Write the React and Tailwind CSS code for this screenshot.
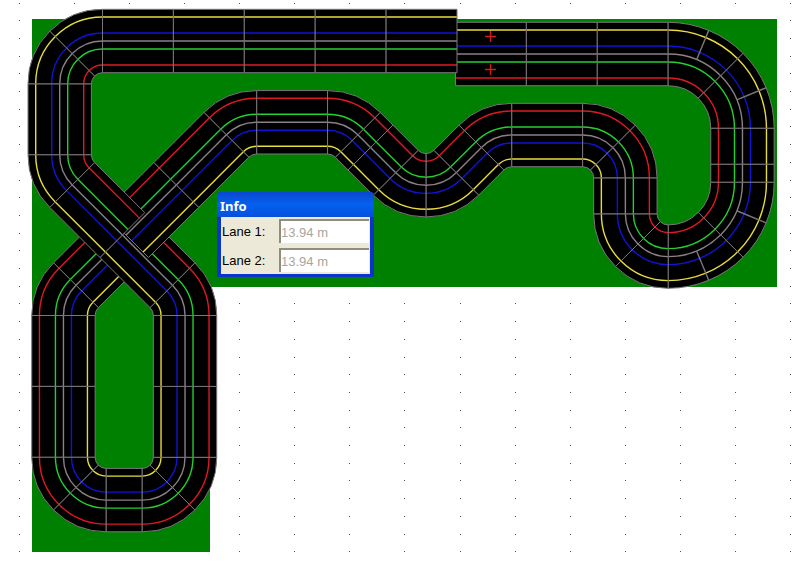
import React from "react";

const HALF_WIDTH = 31.7;
const R1 = 42.8;
const R2 = 74.3;
const FULL = 70.9;
const HALF = 35.6;

// Lane offsets are measured to the right of the driving direction.
const LANES = [
  { offset: 24, color: "#e8dc3c" },
  { offset: 8, color: "#1212d8" },
  { offset: 0, color: "#8a8086" },
  { offset: -8, color: "#22d030" },
  { offset: -24, color: "#e01822" },
];

const line = (length, layer = 1) => ({ length, layer });
const left = (angle, radius = R1, rib = false) => ({ angle: -angle, radius, rib, layer: 1 });
const right = (angle, radius = R1, rib = false) => ({ angle, radius, rib, layer: 1 });

// Every section in driving order; the layers make the crossing.
const SECTIONS = [
  line(FULL), line(FULL), line(FULL), line(FULL), line(FULL),
  left(45), left(45),
  line(FULL),
  left(45),
  line(FULL, 4), line(FULL, 2),
  right(45),
  line(FULL), line(FULL),
  right(45), right(45),
  line(36),
  right(45), right(45),
  line(FULL), line(FULL),
  right(45),
  line(FULL, 0), line(FULL, 3),
  line(FULL),
  right(45),
  line(FULL),
  right(45),
  line(18), line(HALF),
  left(45), left(45),
  line(HALF),
  right(45),
  line(FULL),
  right(45), right(45),
  line(36),
  left(45), left(45),
  left(45, R2, true), left(45, R2, true),
  line(18), line(36),
  left(45, R2, true), left(45, R2, true),
  line(FULL), line(FULL), line(FULL),
];

const rad = (deg) => (deg * Math.PI) / 180;

const side = (pose, offset) => [
  pose.x - Math.sin(rad(pose.h)) * offset,
  pose.y + Math.cos(rad(pose.h)) * offset,
];

function advance(pose, section, part = 1) {
  if (section.length) {
    return {
      x: pose.x + Math.cos(rad(pose.h)) * section.length * part,
      y: pose.y + Math.sin(rad(pose.h)) * section.length * part,
      h: pose.h,
    };
  }
  const turn = Math.sign(section.angle) * section.radius;
  const [cx, cy] = side(pose, turn);
  const h = pose.h + section.angle * part;
  const [x, y] = side({ x: cx, y: cy, h }, -turn);
  return { x, y, h };
}

const at = ([x, y]) => `${x.toFixed(2)} ${y.toFixed(2)}`;

function run(section, from, to, offset, backwards = false) {
  const target = at(side(backwards ? from : to, offset));
  if (section.length) return `L${target}`;
  const sign = Math.sign(section.angle);
  const r = section.radius - sign * offset;
  const sweep = sign > 0 !== backwards ? 1 : 0;
  return `A${r} ${r} 0 0 ${sweep} ${target}`;
}

function buildTrack() {
  let pose = { x: 457, y: 41, h: 180 };
  const pieces = SECTIONS.map((section, id) => {
    const from = pose;
    const to = advance(pose, section);
    pose = to;
    const outline =
      `M${at(side(from, HALF_WIDTH))}` +
      run(section, from, to, HALF_WIDTH) +
      `L${at(side(to, -HALF_WIDTH))}` +
      run(section, from, to, -HALF_WIDTH, true) +
      "Z";
    const lanes = LANES.map(({ offset, color }) => ({
      color,
      d: `M${at(side(from, offset))}${run(section, from, to, offset)}`,
    }));
    let rib = null;
    if (section.rib) {
      const mid = advance(from, section, 0.5);
      rib = `M${at(side(mid, 0))}L${at(side(mid, HALF_WIDTH))}`;
    }
    return { id, layer: section.layer, outline, lanes, rib };
  });
  return pieces.sort((a, b) => a.layer - b.layer || b.id - a.id);
}

const TRACK = buildTrack();

const DOTS = [];
for (let col = 0; col < 40; col++) {
  for (let row = 0; row < 70; row++) {
    DOTS.push([Math.round(19.2 + col * 55.04), Math.round(2.5 + row * 17.7)]);
  }
}

function Piece({ piece }) {
  return (
    <g fill="none" strokeWidth="1.4">
      <path d={piece.outline} fill="#000" />
      {piece.lanes.map((lane) => (
        <path key={lane.color} d={lane.d} stroke={lane.color} />
      ))}
      <path d={piece.outline} stroke="#7c767a" strokeWidth="1" />
      {piece.rib && <path d={piece.rib} stroke="#7c767a" />}
    </g>
  );
}

function TrackPlan() {
  return (
    <svg className="block h-screen w-full" role="img" aria-label="Track plan">
      {DOTS.map(([x, y]) => (
        <rect key={`${x}-${y}`} x={x} y={y} width="1" height="1" fill="#505050" />
      ))}
      <path d="M32 19H777V287H210V552H32Z" fill="#008000" />
      {TRACK.map((piece) => (
        <Piece key={piece.id} piece={piece} />
      ))}
      <path
        d="M485 36.5H496M490.5 31V42M485 69.5H496M490.5 64V75"
        stroke="#d01c1c"
        strokeWidth="1.3"
      />
    </svg>
  );
}

function LaneField({ id, label, value }) {
  return (
    <div className="flex items-center">
      <label htmlFor={id} className="w-[57px] pt-0.5 text-black">
        {label}
      </label>
      <input
        id={id}
        disabled
        defaultValue={value}
        className="h-6 min-w-0 flex-1 border-t-2 border-l-2 border-[#8f8c7e] bg-white text-[#a8a69c]"
      />
    </div>
  );
}

function InfoWindow() {
  return (
    <section
      aria-labelledby="info-title"
      className="absolute top-48 left-[217px] w-[157px] rounded-t-sm border-x-4 border-b-3 border-[#0a35cc] bg-[#0a35cc] font-['Liberation_Sans',Arial,sans-serif] text-[13px] leading-4"
    >
      <h2
        id="info-title"
        className="-mx-1 h-[25px] rounded-t-sm bg-linear-to-b from-[#0a48d0] via-[#0560f0] to-[#0450dc] px-[3px] pt-1 font-['Noto_Sans','Open_Sans',sans-serif] text-[13px] leading-5 font-bold text-white"
      >
        Info
      </h2>
      <div className="flex flex-col gap-[5px] bg-[#ece9d8] px-px pt-0.5 pb-0.5">
        <LaneField id="lane-1" label="Lane 1:" value="13.94 m" />
        <LaneField id="lane-2" label="Lane 2:" value="13.94 m" />
      </div>
    </section>
  );
}

export default function App() {
  return (
    <main className="relative min-h-screen overflow-hidden bg-white">
      <TrackPlan />
      <InfoWindow />
    </main>
  );
}
